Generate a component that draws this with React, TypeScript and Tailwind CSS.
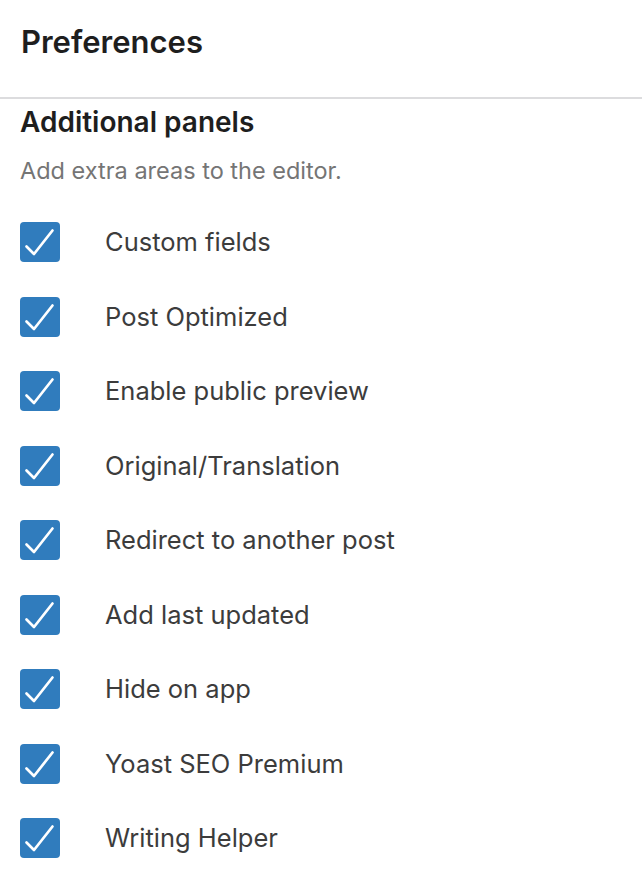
import React from "react";

const items = [
  "Custom fields",
  "Post Optimized",
  "Enable public preview",
  "Original/Translation",
  "Redirect to another post",
  "Add last updated",
  "Hide on app",
  "Yoast SEO Premium",
  "Writing Helper",
];

function Check() {
  return (
    <div className="w-[40px] h-[40px] rounded-[4px] bg-[#307cbd] shrink-0">
      <svg width="40" height="40" viewBox="0 0 40 40" fill="none">
        <path d="M6.5 24.5 L14 32 L32.5 8.5" stroke="white" strokeWidth="2.7" strokeLinecap="round" strokeLinejoin="round" />
      </svg>
    </div>
  );
}

export default function App() {
  return (
    <div className="w-[642px] h-[880px] bg-white overflow-hidden" style={{ fontFamily: "Inter, 'Noto Sans', sans-serif" }}>
      <div className="h-[99px] border-b-2 border-[#dcdcde] px-[21px] pt-[23px]">
        <h1 className="text-[31px] leading-[38px] font-semibold text-[#1e1e1e]">Preferences</h1>
      </div>
      <div className="px-[20px]">
        <h2 className="mt-[5px] text-[28px] leading-[36px] font-semibold text-[#1e1e1e]">Additional panels</h2>
        <p className="mt-[16px] text-[23.5px] leading-[30px] text-[#757575]">Add extra areas to the editor.</p>
        <div className="mt-[19px]">
          {items.map((t) => (
            <div key={t} className="h-[74.5px] flex items-center">
              <Check />
              <span className="ml-[45px] text-[25.5px] text-[#3c3c3c]">{t}</span>
            </div>
          ))}
        </div>
      </div>
    </div>
  );
}
